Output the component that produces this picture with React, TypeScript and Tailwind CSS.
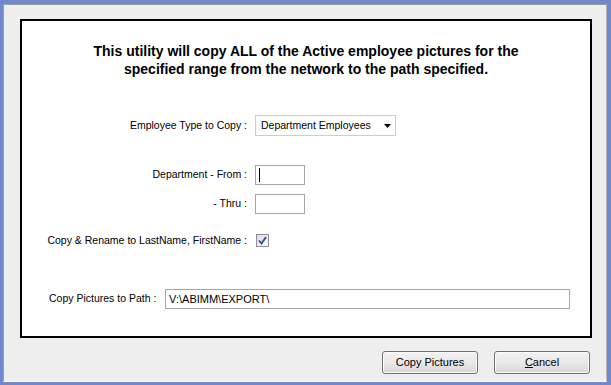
import React from "react";

const FONT = "font-['Liberation_Sans',Arial,sans-serif]";

function Label({ text }: { text: string }) {
  return <div className="w-[226px] shrink-0 text-right pr-px text-[10.5px] text-black whitespace-nowrap">{text}</div>;
}

function TextBox({ width, value, caret }: { width: string; value?: string; caret?: boolean }) {
  return (
    <div className={`${width} h-[20px] border border-[#a6a6a6] bg-white flex items-center pl-[3px] text-[11px] text-black`}>
      {caret && <div className="w-px h-[14px] bg-black" />}
      {value}
    </div>
  );
}

function Button({ children }: { children: React.ReactNode }) {
  return (
    <div className="w-[96px] h-[23px] rounded-[3px] border border-[#707070] bg-gradient-to-b from-[#f2f2f2] via-[#e9e9e9] to-[#d6d6d6] flex items-center justify-center text-[11px] text-black shadow-[inset_0_0_0_1px_#fbfbfb]">
      {children}
    </div>
  );
}

export default function App() {
  return (
    <div className={`w-[611px] h-[385px] bg-[#7188cd] pt-[4px] pl-[3px] pr-[4px] pb-[3px] flex ${FONT}`}>
      <div className="flex-1 flex flex-col border-t border-l border-[#9c9c9c] border-r-[#b5b5b5] border-b-white border-r border-b bg-[#eeeeee]">
        {/* main panel */}
        <div className="mt-[14px] ml-[16px] mr-[14px] h-[319px] border-2 border-black bg-white flex flex-col">
          <div className="mt-[21px] text-center text-[14px] leading-[18px] font-bold text-black">
            This utility will copy ALL of the Active employee pictures for the
            <br />
            specified range from the network to the path specified.
          </div>

          <div className="mt-[37px] flex items-center">
            <Label text="Employee Type to Copy :" />
            <div className="ml-[7px] w-[141px] h-[21px] border border-[#cdcdcd] bg-white flex items-center justify-between pl-[5px] pr-[4px] text-[10.5px] text-black">
              <span>Department Employees</span>
              <svg width="7" height="4" viewBox="0 0 7 4">
                <path d="M0 0 H7 L3.5 4 Z" fill="#000" />
              </svg>
            </div>
          </div>

          <div className="mt-[29px] flex items-center">
            <Label text="Department - From :" />
            <div className="ml-[7px]">
              <TextBox width="w-[50px]" caret />
            </div>
          </div>

          <div className="mt-[9px] flex items-center">
            <Label text="- Thru :" />
            <div className="ml-[7px]">
              <TextBox width="w-[50px]" />
            </div>
          </div>

          <div className="mt-[19px] flex items-center">
            <Label text="Copy & Rename to LastName, FirstName :" />
            <div className="ml-[8px] w-[13px] h-[13px] border border-[#8e8f8f] bg-gradient-to-br from-[#dcdcdc] to-[#fbfbfb] flex items-center justify-center">
              <svg width="9" height="9" viewBox="0 0 9 9">
                <path d="M1 4.5 L3.5 7.5 L8 1" fill="none" stroke="#2a4fa8" strokeWidth="1.8" />
              </svg>
            </div>
          </div>

          <div className="mt-[40px] flex items-center pl-[27px]">
            <div className="w-[116px] shrink-0 whitespace-nowrap text-[10.5px] text-black">Copy Pictures to Path :</div>
            <TextBox width="w-[405px]" value="V:\ABIMM\EXPORT\" />
          </div>
        </div>

        {/* buttons */}
        <div className="mt-[13px] flex justify-end gap-[16px] pr-[16px]">
          <Button>Copy Pictures</Button>
          <Button>
            <span>
              <span className="underline">C</span>ancel
            </span>
          </Button>
        </div>
      </div>
    </div>
  );
}
